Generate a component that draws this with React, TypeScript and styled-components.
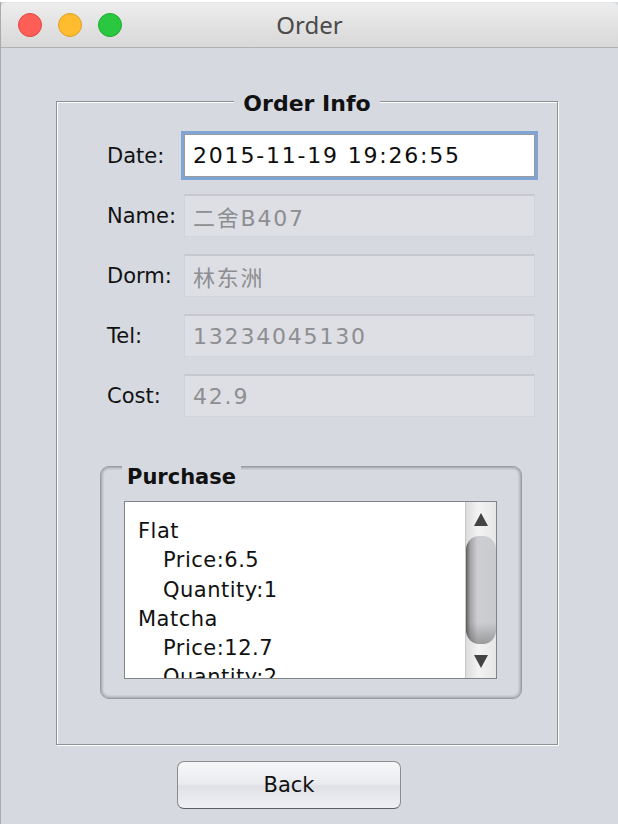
import React from 'react';
import styled, { createGlobalStyle } from 'styled-components';

const panelBg = '#d6d9e0';

const GlobalStyle = createGlobalStyle`
  html, body {
    margin: 0;
    padding: 0;
    background: #ffffff;
  }
  body {
    font-family: "DejaVu Sans", "Noto Sans CJK SC", sans-serif;
    color: #111111;
  }
`;

const Window = styled.div`
  box-sizing: border-box;
  width: 618px;
  height: 822px;
  margin-top: 2px;
  display: flex;
  flex-direction: column;
  border-left: 1px solid #a9aaae;
  background: ${panelBg};
  overflow: hidden;
`;

const TitleBar = styled.header`
  flex: none;
  height: 44px;
  display: grid;
  grid-template-columns: 1fr auto 1fr;
  align-items: center;
  border-radius: 6px 6px 0 0;
  border-top: 1px solid #e6e6e6;
  border-bottom: 1px solid #b1b1b1;
  background: linear-gradient(#ededed, #d8d8d8);
`;

const Lights = styled.div`
  display: flex;
  gap: 16px;
  padding-left: 17px;
`;

const Light = styled.span<{ $fill: string; $edge: string }>`
  width: 24px;
  height: 24px;
  box-sizing: border-box;
  border-radius: 50%;
  background: ${(p) => p.$fill};
  border: 1px solid ${(p) => p.$edge};
`;

const Title = styled.h1`
  margin: 0;
  font-family: "Noto Sans", sans-serif;
  font-weight: 400;
  font-size: 24px;
  color: #4b4b4b;
  line-height: 1;
`;

const Content = styled.main`
  flex: 1;
  padding: 53px 0 0 55px;
`;

const InfoBox = styled.section`
  box-sizing: border-box;
  width: 502px;
  height: 644px;
  display: flex;
  flex-direction: column;
  border: 1px solid #8e9096;
  box-shadow: inset 1px 1px 0 #ffffff, 1px 1px 0 #ffffff;
`;

const InfoLegend = styled.h2`
  width: fit-content;
  margin: -10px auto 0;
  padding: 0 9px;
  background: ${panelBg};
  font-size: 22px;
  font-weight: 700;
  line-height: 24px;
`;

const Form = styled.div`
  display: grid;
  grid-template-columns: 77px 351px;
  grid-auto-rows: 43px;
  row-gap: 17px;
  margin: 18px 0 0 50px;
`;

const Label = styled.label`
  align-self: center;
  font-size: 21px;
`;

const Field = styled.div<{ $active?: boolean }>`
  box-sizing: border-box;
  display: flex;
  align-items: center;
  padding-left: 8px;
  font-size: 22px;
  letter-spacing: 1.8px;
  white-space: nowrap;
  ${(p) =>
    p.$active
      ? `
    background: #ffffff;
    color: #0d0d0d;
    border: 1px solid #9a9ca0;
    box-shadow: 0 0 0 3px #7ea5d3;
  `
      : `
    background: #dddfe4;
    color: #8d8e91;
    border: 1px solid #d2d4d9;
    border-top: 2px solid #c6c8cd;
  `}
`;

const PurchaseBox = styled.section`
  box-sizing: border-box;
  height: 233px;
  margin: 49px 35px 0 43px;
  display: flex;
  flex-direction: column;
  border-radius: 9px;
  border: 1px solid #999ca2;
  box-shadow: inset 0 0 0 1px #aeb1b6, inset 0 0 0 2px #c0c3c8, inset 0 0 0 3px #cbced3;
`;

const PurchaseLegend = styled.h3`
  width: fit-content;
  margin: -2px 0 0 21px;
  padding: 0 5px;
  background: ${panelBg};
  font-size: 21px;
  font-weight: 700;
  line-height: 24px;
`;

const ListBox = styled.div`
  flex: none;
  height: 178px;
  margin: 12px 24px 0 23px;
  display: flex;
  box-sizing: border-box;
  border: 1px solid #80838a;
  background: #ffffff;
  overflow: hidden;
`;

const ListText = styled.div`
  flex: 1;
  padding: 15px 0 0 13px;
  font-size: 21px;
  line-height: 29.3px;
  letter-spacing: 0.5px;
  white-space: nowrap;
`;

const ListLine = styled.div<{ $indent?: boolean }>`
  padding-left: ${(p) => (p.$indent ? '25px' : '0')};
`;

const ScrollBar = styled.div`
  flex: none;
  width: 30px;
  display: flex;
  flex-direction: column;
  background: linear-gradient(90deg, #dcdcdc, #f3f3f3 40%, #e6e6e6);
  border-left: 1px solid #c8c8c8;
`;

const ScrollArrow = styled.div<{ $down?: boolean }>`
  flex: none;
  height: ${(p) => (p.$down ? '34px' : '34px')};
  display: flex;
  align-items: center;
  justify-content: center;
  &::after {
    content: '';
    border-left: 7px solid transparent;
    border-right: 7px solid transparent;
    ${(p) =>
      p.$down
        ? 'border-top: 13px solid #434343;'
        : 'border-bottom: 13px solid #434343;'}
  }
`;

const Thumb = styled.div`
  flex: 1;
  border-radius: 13px / 14px;
  background:
    linear-gradient(180deg, rgba(255, 255, 255, 0) 80%, rgba(60, 60, 60, 0.35) 100%),
    linear-gradient(90deg, #5c5c5c 0%, #a3a3a5 14%, #cdced1 38%, #c9cacd 100%);
`;

const BackButton = styled.button`
  display: block;
  width: 224px;
  height: 48px;
  margin: 16px 0 0 121px;
  border-radius: 7px;
  border: 1px solid #8b8c90;
  border-bottom-color: #5e5f63;
  background: linear-gradient(#f6f7f9, #eaebef 48%, #dfe1e6 52%, #eef0f4);
  font-family: "DejaVu Sans", sans-serif;
  font-size: 21px;
  color: #111111;
  padding: 0;
`;

const fields = [
  { label: 'Date:', value: '2015-11-19 19:26:55', active: true },
  { label: 'Name:', value: '二舍B407' },
  { label: 'Dorm:', value: '林东洲' },
  { label: 'Tel:', value: '13234045130' },
  { label: 'Cost:', value: '42.9' },
];

const items = [
  { name: 'Flat', price: '6.5', quantity: '1' },
  { name: 'Matcha', price: '12.7', quantity: '2' },
];

const App: React.FC = () => (
  <>
    <GlobalStyle />
    <Window>
      <TitleBar>
        <Lights>
          <Light $fill="#fd5f57" $edge="#e1463f" />
          <Light $fill="#febc2e" $edge="#dfa024" />
          <Light $fill="#2ac840" $edge="#1cab2b" />
        </Lights>
        <Title>Order</Title>
        <span />
      </TitleBar>
      <Content>
        <InfoBox>
          <InfoLegend>Order Info</InfoLegend>
          <Form>
            {fields.map((f) => (
              <React.Fragment key={f.label}>
                <Label>{f.label}</Label>
                <Field $active={f.active}>{f.value}</Field>
              </React.Fragment>
            ))}
          </Form>
          <PurchaseBox>
            <PurchaseLegend>Purchase</PurchaseLegend>
            <ListBox>
              <ListText>
                {items.map((it) => (
                  <React.Fragment key={it.name}>
                    <ListLine>{it.name}</ListLine>
                    <ListLine $indent>Price:{it.price}</ListLine>
                    <ListLine $indent>Quantity:{it.quantity}</ListLine>
                  </React.Fragment>
                ))}
              </ListText>
              <ScrollBar>
                <ScrollArrow />
                <Thumb />
                <ScrollArrow $down />
              </ScrollBar>
            </ListBox>
          </PurchaseBox>
        </InfoBox>
        <BackButton>Back</BackButton>
      </Content>
    </Window>
  </>
);

export default App;
